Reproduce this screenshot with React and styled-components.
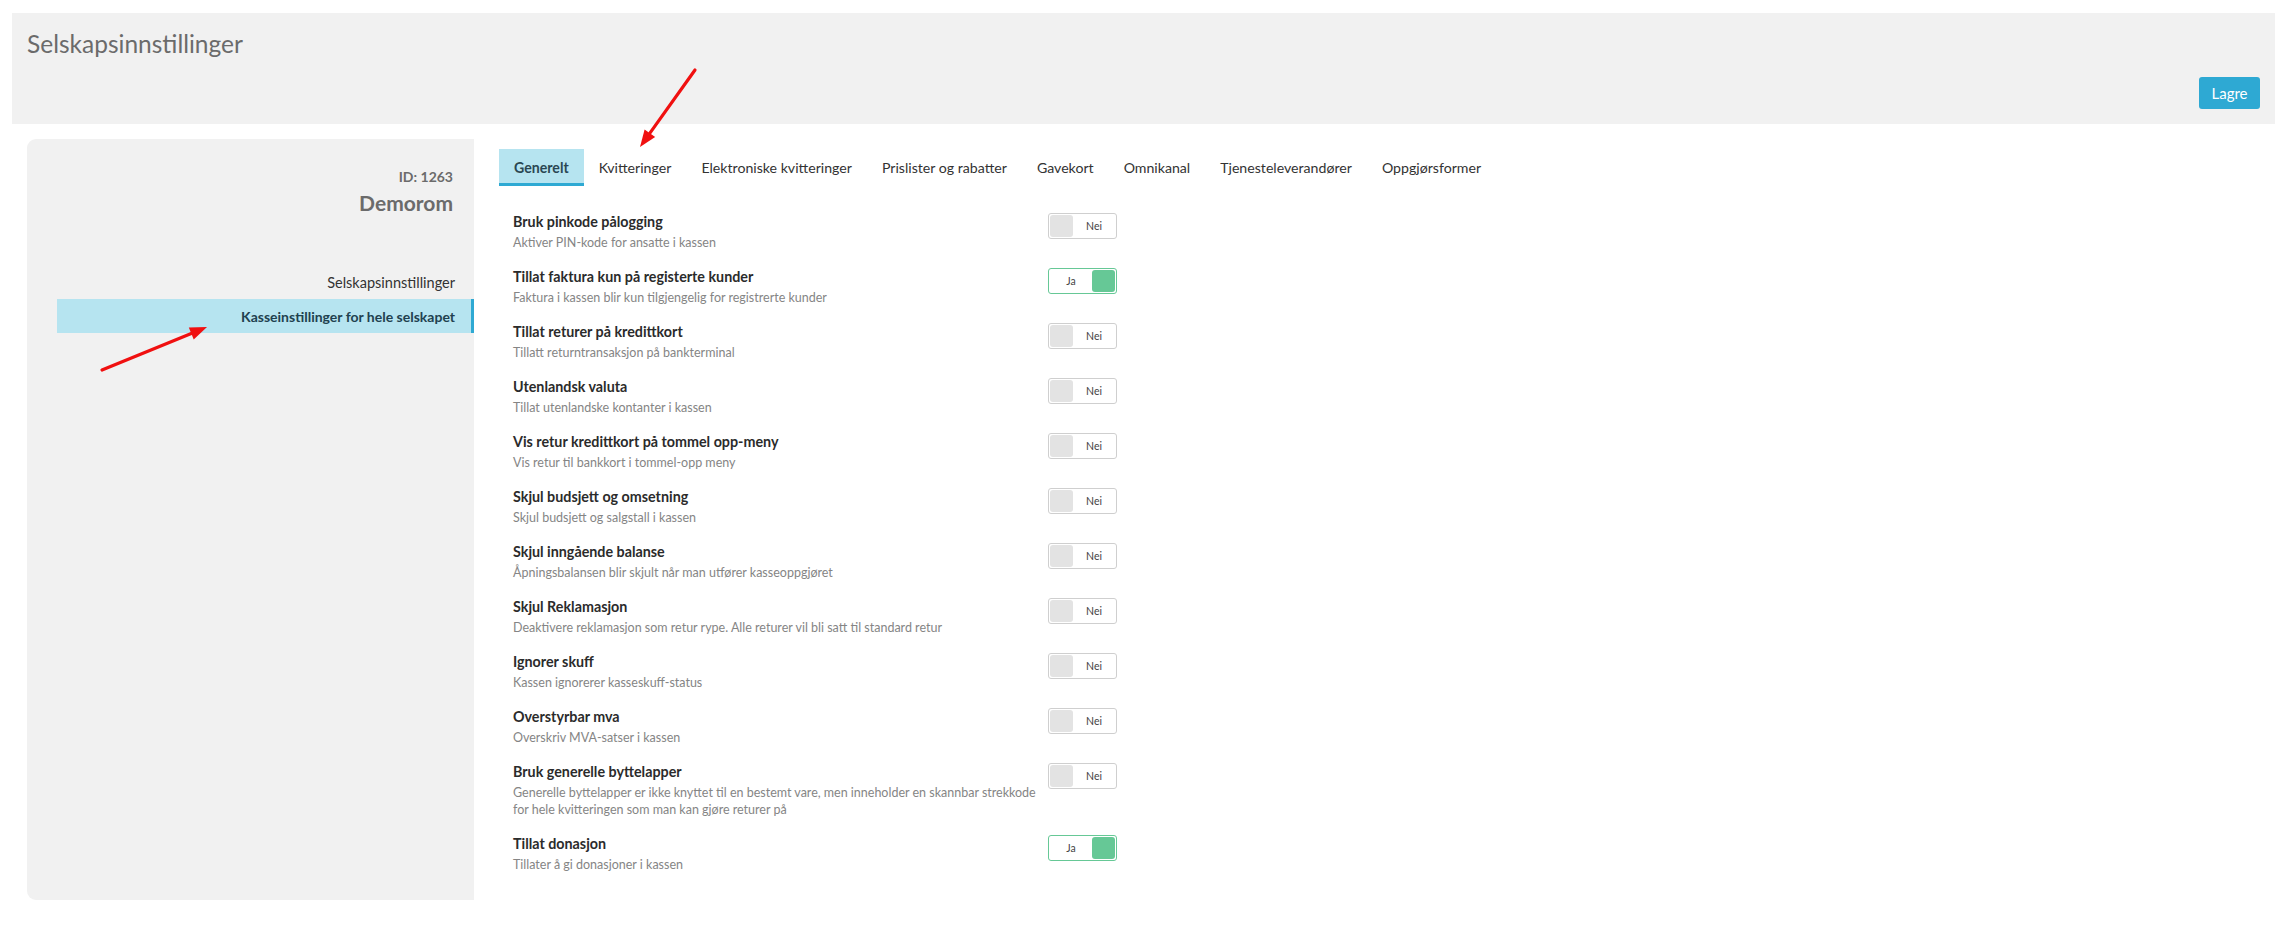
import React from 'react';
import styled, { createGlobalStyle } from 'styled-components';

const GlobalStyle = createGlobalStyle`
  html, body {
    margin: 0;
    padding: 0;
    background: #ffffff;
    font-family: Lato, "Open Sans", "Liberation Sans", sans-serif;
    color: #333;
  }
  * { box-sizing: border-box; }
`;

const Page = styled.div`
  position: relative;
  width: 2279px;
  height: 925px;
  overflow: hidden;
  padding: 13px 4px 0 12px;
`;

const Header = styled.header`
  height: 111px;
  background: #f1f1f1;
  display: flex;
  flex-direction: column;
  justify-content: space-between;
  padding: 16px 15px 15px 15px;
`;

const PageTitle = styled.h1`
  margin: 0;
  font-size: 24.5px;
  line-height: 30px;
  font-weight: 400;
  color: #6b6b6b;
`;

const SaveButton = styled.button`
  align-self: flex-end;
  width: 61px;
  height: 32px;
  border: 0;
  border-radius: 3px;
  background: #2ea9d3;
  color: #fff;
  font-family: inherit;
  font-size: 15px;
  cursor: pointer;
`;

const Body = styled.div`
  display: flex;
  gap: 25px;
  padding: 15px 0 0 15px;
`;

const Sidebar = styled.aside`
  width: 447px;
  flex-shrink: 0;
  background: #f1f1f1;
  border-radius: 9px 0 0 9px;
  padding-top: 28px;
`;

const CompanyId = styled.div`
  text-align: right;
  padding-right: 21px;
  font-size: 14px;
  line-height: 20px;
  font-weight: 700;
  color: #6b6b6b;
`;

const CompanyName = styled.div`
  margin-top: 2px;
  text-align: right;
  padding-right: 21px;
  font-size: 21px;
  line-height: 28px;
  font-weight: 700;
  color: #6b6b6b;
`;

const Menu = styled.nav`
  margin: 48px 0 0 30px;
  display: flex;
  flex-direction: column;
`;

const MenuItem = styled.div`
  height: 34px;
  display: flex;
  align-items: center;
  justify-content: flex-end;
  padding-right: ${(p) => (p.$active ? '16px' : '19px')};
  font-size: ${(p) => (p.$active ? '14px' : '14.5px')};
  font-weight: ${(p) => (p.$active ? 700 : 400)};
  color: ${(p) => (p.$active ? '#21414f' : '#333')};
  background: ${(p) => (p.$active ? '#b6e4f0' : 'transparent')};
  border-right: ${(p) => (p.$active ? '3px solid #2ea9d3' : '0')};
`;

const Main = styled.main`
  flex: 1;
  padding: 10px 0 11px 0;
`;

const Tabs = styled.div`
  display: flex;
`;

const Tab = styled.div`
  height: 37px;
  padding: 3px 15px 0;
  display: flex;
  align-items: center;
  font-size: 14.15px;
  border-bottom: 3px solid ${(p) => (p.$active ? '#2ea9d3' : 'transparent')};
  background: ${(p) => (p.$active ? '#b6e4f0' : 'transparent')};
  font-weight: ${(p) => (p.$active ? 700 : 400)};
  color: ${(p) => (p.$active ? '#2a4753' : '#333')};
`;

const SettingsList = styled.div`
  margin-top: 26px;
  padding-left: 14px;
  display: flex;
  flex-direction: column;
`;

const Row = styled.div`
  display: grid;
  grid-template-columns: 535px 69px;
  padding-bottom: 16px;
`;

const Label = styled.div`
  display: flex;
  flex-direction: column;
  padding-right: 4px;
`;

const RowTitle = styled.div`
  font-size: 14.3px;
  line-height: 20px;
  font-weight: 700;
  color: #2b2b2b;
`;

const RowDesc = styled.div`
  margin-top: 2px;
  font-size: 12.5px;
  line-height: 17px;
  color: #858585;
`;

const ToggleBox = styled.div`
  margin-top: 1px;
  width: 69px;
  height: 26px;
  border: 1px solid ${(p) => (p.$on ? '#66c896' : '#cfcfcf')};
  border-radius: 3px;
  padding: 1px;
  display: flex;
  flex-direction: ${(p) => (p.$on ? 'row-reverse' : 'row')};
  background: #fff;
`;

const Knob = styled.span`
  width: 23px;
  height: 22px;
  border-radius: 3px;
  background: ${(p) => (p.$on ? '#66c896' : '#e3e3e3')};
`;

const ToggleText = styled.span`
  flex: 1;
  display: flex;
  align-items: center;
  justify-content: center;
  font-size: 10.5px;
  color: #444;
`;

const Overlay = styled.svg`
  position: absolute;
  left: 0;
  top: 0;
  pointer-events: none;
`;

const tabs = [
  'Generelt',
  'Kvitteringer',
  'Elektroniske kvitteringer',
  'Prislister og rabatter',
  'Gavekort',
  'Omnikanal',
  'Tjenesteleverandører',
  'Oppgjørsformer',
];

const settings = [
  { title: 'Bruk pinkode pålogging', desc: 'Aktiver PIN-kode for ansatte i kassen', on: false },
  { title: 'Tillat faktura kun på registerte kunder', desc: 'Faktura i kassen blir kun tilgjengelig for registrerte kunder', on: true },
  { title: 'Tillat returer på kredittkort', desc: 'Tillatt returntransaksjon på bankterminal', on: false },
  { title: 'Utenlandsk valuta', desc: 'Tillat utenlandske kontanter i kassen', on: false },
  { title: 'Vis retur kredittkort på tommel opp-meny', desc: 'Vis retur til bankkort i tommel-opp meny', on: false },
  { title: 'Skjul budsjett og omsetning', desc: 'Skjul budsjett og salgstall i kassen', on: false },
  { title: 'Skjul inngående balanse', desc: 'Åpningsbalansen blir skjult når man utfører kasseoppgjøret', on: false },
  { title: 'Skjul Reklamasjon', desc: 'Deaktivere reklamasjon som retur rype. Alle returer vil bli satt til standard retur', on: false },
  { title: 'Ignorer skuff', desc: 'Kassen ignorerer kasseskuff-status', on: false },
  { title: 'Overstyrbar mva', desc: 'Overskriv MVA-satser i kassen', on: false },
  { title: 'Bruk generelle byttelapper', desc: 'Generelle byttelapper er ikke knyttet til en bestemt vare, men inneholder en skannbar strekkode for hele kvitteringen som man kan gjøre returer på', on: false },
  { title: 'Tillat donasjon', desc: 'Tillater å gi donasjoner i kassen', on: true },
];

const Toggle = ({ on }) => (
  <ToggleBox $on={on}>
    <Knob $on={on} />
    <ToggleText>{on ? 'Ja' : 'Nei'}</ToggleText>
  </ToggleBox>
);

// red annotation arrow drawn over the screenshot
const Arrow = ({ from, to }) => {
  const dx = to[0] - from[0];
  const dy = to[1] - from[1];
  const len = Math.hypot(dx, dy);
  const ux = dx / len;
  const uy = dy / len;
  const bx = to[0] - ux * 17;
  const by = to[1] - uy * 17;
  const px = -uy * 6.5;
  const py = ux * 6.5;
  return (
    <g>
      <line x1={from[0]} y1={from[1]} x2={bx} y2={by} stroke="#f01010" strokeWidth="3.2" strokeLinecap="round" />
      <polygon points={`${to[0]},${to[1]} ${bx + px},${by + py} ${bx - px},${by - py}`} fill="#f01010" />
    </g>
  );
};

export default function App() {
  return (
    <>
      <GlobalStyle />
      <Page>
        <Header>
          <PageTitle>Selskapsinnstillinger</PageTitle>
          <SaveButton>Lagre</SaveButton>
        </Header>
        <Body>
          <Sidebar>
            <CompanyId>ID: 1263</CompanyId>
            <CompanyName>Demorom</CompanyName>
            <Menu>
              <MenuItem>Selskapsinnstillinger</MenuItem>
              <MenuItem $active>Kasseinstillinger for hele selskapet</MenuItem>
            </Menu>
          </Sidebar>
          <Main>
            <Tabs>
              {tabs.map((t, i) => (
                <Tab key={t} $active={i === 0}>{t}</Tab>
              ))}
            </Tabs>
            <SettingsList>
              {settings.map((s) => (
                <Row key={s.title}>
                  <Label>
                    <RowTitle>{s.title}</RowTitle>
                    <RowDesc>{s.desc}</RowDesc>
                  </Label>
                  <Toggle on={s.on} />
                </Row>
              ))}
            </SettingsList>
          </Main>
        </Body>
        <Overlay width="2279" height="925">
          <Arrow from={[695, 70]} to={[640, 147]} />
          <Arrow from={[102, 370]} to={[207, 327]} />
        </Overlay>
      </Page>
    </>
  );
}
